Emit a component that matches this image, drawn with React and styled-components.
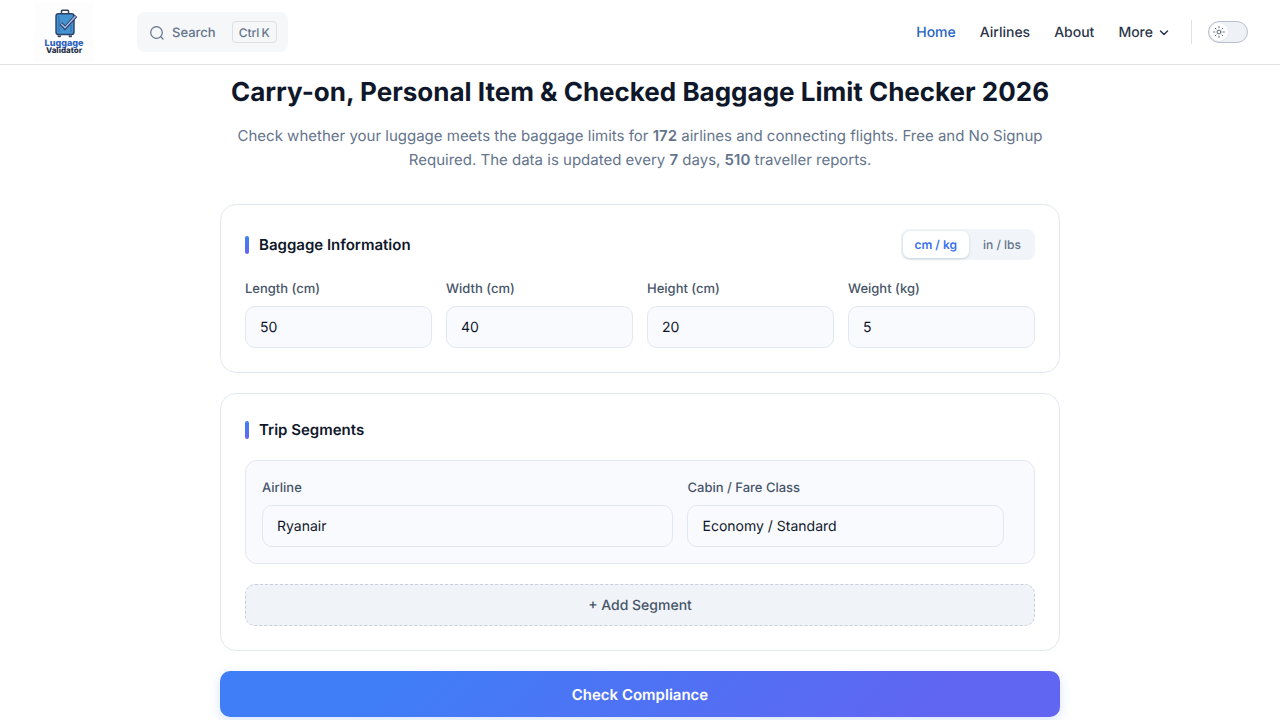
import React, { useState } from "react";
import styled, { createGlobalStyle } from "styled-components";

const GlobalStyle = createGlobalStyle`
  *, *::before, *::after { box-sizing: border-box; }
  body {
    margin: 0;
    background: #ffffff;
    color: #0f172a;
    font-family: Inter, "Liberation Sans", sans-serif;
    -webkit-font-smoothing: antialiased;
    text-rendering: geometricPrecision;
  }
  button, input, select { font-family: inherit; margin: 0; text-rendering: inherit; }
`;

const Header = styled.header`
  display: flex;
  align-items: center;
  height: 65px;
  padding: 0 32px;
  border-bottom: 1px solid #e2e2e3;
`;

const LogoLink = styled.a`
  display: flex;
  width: 64px;
  height: 64px;
  margin-right: 41px;
`;

const LogoText = styled.text`
  font-weight: 800;
  text-anchor: middle;
`;

const SearchButton = styled.button`
  display: flex;
  align-items: center;
  gap: 8px;
  height: 40px;
  padding: 0 11px 0 12px;
  border: 0;
  border-radius: 8px;
  background: #f5f7f9;
  color: #64748b;
  font-size: 13px;
  font-weight: 500;
`;

const SearchLabel = styled.span`
  padding-top: 2px;
`;

const Kbd = styled.kbd`
  display: flex;
  gap: 2px;
  height: 22px;
  margin-left: 8px;
  padding: 0 6px;
  border: 1px solid #dcdfe4;
  border-radius: 4px;
  font-family: inherit;
  font-size: 12px;
  line-height: 21px;
`;

const Nav = styled.nav`
  display: flex;
  align-items: center;
  gap: 24px;
  margin-left: auto;
  padding-top: 2px;
`;

const NavLink = styled.a`
  color: ${(p) => (p.$active ? "#2563c4" : "#2b3648")};
  font-size: 14px;
  font-weight: 500;
  line-height: 24px;
  text-decoration: none;
`;

const MoreButton = styled.button`
  display: flex;
  align-items: center;
  gap: 4px;
  padding: 0;
  border: 0;
  background: none;
  color: #2b3648;
  font-size: 14px;
  font-weight: 500;
  line-height: 24px;
`;

const Divider = styled.span`
  width: 1px;
  height: 24px;
  margin: 0 16px 0 20px;
  background: #e2e2e3;
`;

const ThemeSwitch = styled.button`
  width: 40px;
  height: 22px;
  padding: 1px;
  display: flex;
  align-items: center;
  border: 1px solid #b9c0cc;
  border-radius: 11px;
  background: #eef2f6;
`;

const Knob = styled.span`
  display: grid;
  place-items: center;
  width: 18px;
  height: 18px;
  border-radius: 9px;
  background: #ffffff;
  color: #5b6575;
  box-shadow: 0 1px 2px rgba(0, 0, 0, 0.06);
`;

const Main = styled.main`
  max-width: 888px;
  margin: 0 auto;
  padding: 8px 24px 24px;
`;

const Title = styled.h1`
  margin: 0;
  font-size: 26px;
  font-weight: 700;
  line-height: 40px;
  text-align: center;
  color: #0f172a;
`;

const Intro = styled.p`
  margin: 11px 0 32px;
  font-size: 15px;
  line-height: 24px;
  text-align: center;
  color: #64748b;

  strong { font-weight: 600; }
`;

const Card = styled.section`
  margin-bottom: 20px;
  padding: 24px;
  border: 1px solid #e2e8f0;
  border-radius: 16px;
  background: #ffffff;
`;

const CardHead = styled.div`
  display: flex;
  align-items: center;
  justify-content: space-between;
  margin-bottom: 18px;
`;

const CardTitle = styled.h2`
  display: flex;
  align-items: center;
  gap: 10px;
  margin: 0;
  font-size: 15px;
  font-weight: 600;
  line-height: 24px;

  &::before {
    content: "";
    width: 4px;
    height: 18px;
    border-radius: 2px;
    background: linear-gradient(180deg, #3b82f6, #6366f1);
  }
`;

const UnitToggle = styled.div`
  display: flex;
  gap: 2px;
  height: 31px;
  padding: 2px;
  border-radius: 8px;
  background: #f1f5f9;
`;

const UnitButton = styled.button`
  padding: 0 12px;
  border: 0;
  border-radius: 7px;
  font-size: 12px;
  font-weight: ${(p) => (p.$active ? 600 : 500)};
  color: ${(p) => (p.$active ? "#3b72f0" : "#64748b")};
  background: ${(p) => (p.$active ? "#ffffff" : "transparent")};
  box-shadow: ${(p) => (p.$active ? "0 1px 3px rgba(30, 58, 110, 0.2)" : "none")};
`;

const MeasureGrid = styled.div`
  display: grid;
  grid-template-columns: repeat(4, 1fr);
  gap: 14px;
`;

const FieldBox = styled.div`
  display: flex;
  flex-direction: column;
  gap: 6px;
  min-width: 0;
`;

const Label = styled.label`
  font-size: 13px;
  font-weight: 500;
  line-height: 22px;
  color: #475569;
`;

const Input = styled.input`
  width: 100%;
  height: 42px;
  padding: 0 14px;
  border: 1px solid #e2e8f0;
  border-radius: 10px;
  background: #f9fafe;
  color: #0f172a;
  font-size: 14px;
  appearance: none;
  outline: 0;
`;

const Segment = styled.div`
  display: grid;
  grid-template-columns: 13fr 10fr auto;
  gap: 14px;
  margin-bottom: 20px;
  padding: 16px;
  border: 1px solid #e2e8f0;
  border-radius: 12px;
  background: #f9fafe;
`;

const AddButton = styled.button`
  width: 100%;
  height: 42px;
  border: 1px dashed #c8cfda;
  border-radius: 10px;
  background: #f0f3f8;
  color: #475569;
  font-size: 14px;
  font-weight: 500;
`;

const SubmitButton = styled.button`
  width: 100%;
  height: 46px;
  border: 0;
  border-radius: 10px;
  background: linear-gradient(135deg, #3f7ef6 20%, #6065f2 85%);
  color: #ffffff;
  font-size: 15px;
  font-weight: 600;
  box-shadow: 0 4px 12px rgba(59, 130, 246, 0.2);
`;

function Logo() {
  return (
    <svg width="64" height="64" viewBox="0 0 64 64" role="img" aria-label="Luggage Validator">
      <rect x="2" y="3" width="60" height="59" fill="#fdfdfe" />
      <path d="M29.500 14v-3q0-.8.8-.8h5.400q.8 0 .8.800v3" fill="none" stroke="#34405a" strokeWidth="1.500" />
      <rect x="24" y="13.800" width="18" height="20.700" rx="2.500" fill="#4492cf" stroke="#2b4168" strokeWidth="1.400" />
      <path d="M27 16v16M39 25v7" stroke="#2f6cab" strokeWidth="1" />
      <path d="M26 35.500v1.200h2.500v-1.200M37 35.500v1.200h2.500v-1.200" fill="#34405a" stroke="#34405a" />
      <path d="M29 23.500l4 4.500L44 15.800" fill="none" stroke="#2b3a60" strokeWidth="3.400" />
      <path d="M29.300 23.800l3.700 3.900L43.500 16.300" fill="none" stroke="#a3bdec" strokeWidth="1.600" />
      <LogoText x="32" y="46" fontSize="9" fill="#2c62bd">Luggage</LogoText>
      <LogoText x="32" y="53" fontSize="8" fill="#26324a">Validator</LogoText>
    </svg>
  );
}

function Field({ id, label, children, ...rest }) {
  return (
    <FieldBox>
      <Label htmlFor={id}>{label}</Label>
      <Input id={id} {...rest}>{children}</Input>
    </FieldBox>
  );
}

const measures = [
  ["length", "Length", "50", "cm", "in"],
  ["width", "Width", "40", "cm", "in"],
  ["height", "Height", "20", "cm", "in"],
  ["weight", "Weight", "5", "kg", "lbs"],
];

export default function App() {
  const [metric, setMetric] = useState(true);
  return (
    <>
      <GlobalStyle />
      <Header>
        <LogoLink href="#"><Logo /></LogoLink>
        <SearchButton type="button">
          <svg width="15" height="15" viewBox="0 0 15 15" fill="none" stroke="currentColor" strokeWidth="1.200" strokeLinecap="round" aria-hidden="true">
            <circle cx="7.500" cy="7.500" r="5.800" />
            <path d="M11.700 11.700l2.300 2.300" />
          </svg>
          <SearchLabel>Search</SearchLabel>
          <Kbd><span>Ctrl</span><span>K</span></Kbd>
        </SearchButton>
        <Nav>
          <NavLink href="#" $active>Home</NavLink>
          <NavLink href="#">Airlines</NavLink>
          <NavLink href="#">About</NavLink>
          <MoreButton type="button">
            More
            <svg width="14" height="14" viewBox="0 0 14 14" fill="none" stroke="currentColor" strokeWidth="1.500" strokeLinecap="round" strokeLinejoin="round" aria-hidden="true">
              <path d="M3.500 5L7 8.500l3.500-3.500" />
            </svg>
          </MoreButton>
        </Nav>
        <Divider />
        <ThemeSwitch type="button" role="switch" aria-checked="false" aria-label="Dark theme">
          <Knob>
            <svg width="12" height="12" viewBox="0 0 12 12" fill="none" stroke="currentColor" strokeWidth="1" strokeLinecap="round" aria-hidden="true">
              <circle cx="6" cy="6" r="1.900" />
              <path d="M6 .7v1.100M6 10.200v1.100M.7 6h1.100M10.200 6h1.100M2.300 2.300l.7.700M9 9l.7.700M2.300 9.700l.7-.7M9 3l.7-.7" />
            </svg>
          </Knob>
        </ThemeSwitch>
      </Header>
      <Main>
        <Title>Carry-on, Personal Item &amp; Checked Baggage Limit Checker 2026</Title>
        <Intro>
          Check whether your luggage meets the baggage limits for <strong>172</strong> airlines and connecting
          flights. Free and No Signup Required. The data is updated every <strong>7</strong> days,{" "}
          <strong>510</strong> traveller reports.
        </Intro>
        <Card>
          <CardHead>
            <CardTitle>Baggage Information</CardTitle>
            <UnitToggle>
              <UnitButton type="button" $active={metric} onClick={() => setMetric(true)}>cm / kg</UnitButton>
              <UnitButton type="button" $active={!metric} onClick={() => setMetric(false)}>in / lbs</UnitButton>
            </UnitToggle>
          </CardHead>
          <MeasureGrid>
            {measures.map(([id, name, value, si, imperial]) => (
              <Field key={id} id={id} label={`${name} (${metric ? si : imperial})`} defaultValue={value} inputMode="decimal" />
            ))}
          </MeasureGrid>
        </Card>
        <Card>
          <CardHead>
            <CardTitle>Trip Segments</CardTitle>
          </CardHead>
          <Segment>
            <Field id="airline" label="Airline" defaultValue="Ryanair" />
            <Field id="cabin" label="Cabin / Fare Class" as="select">
              <option>Economy / Standard</option>
            </Field>
            <span />
          </Segment>
          <AddButton type="button">+ Add Segment</AddButton>
        </Card>
        <SubmitButton type="button">Check Compliance</SubmitButton>
      </Main>
    </>
  );
}
